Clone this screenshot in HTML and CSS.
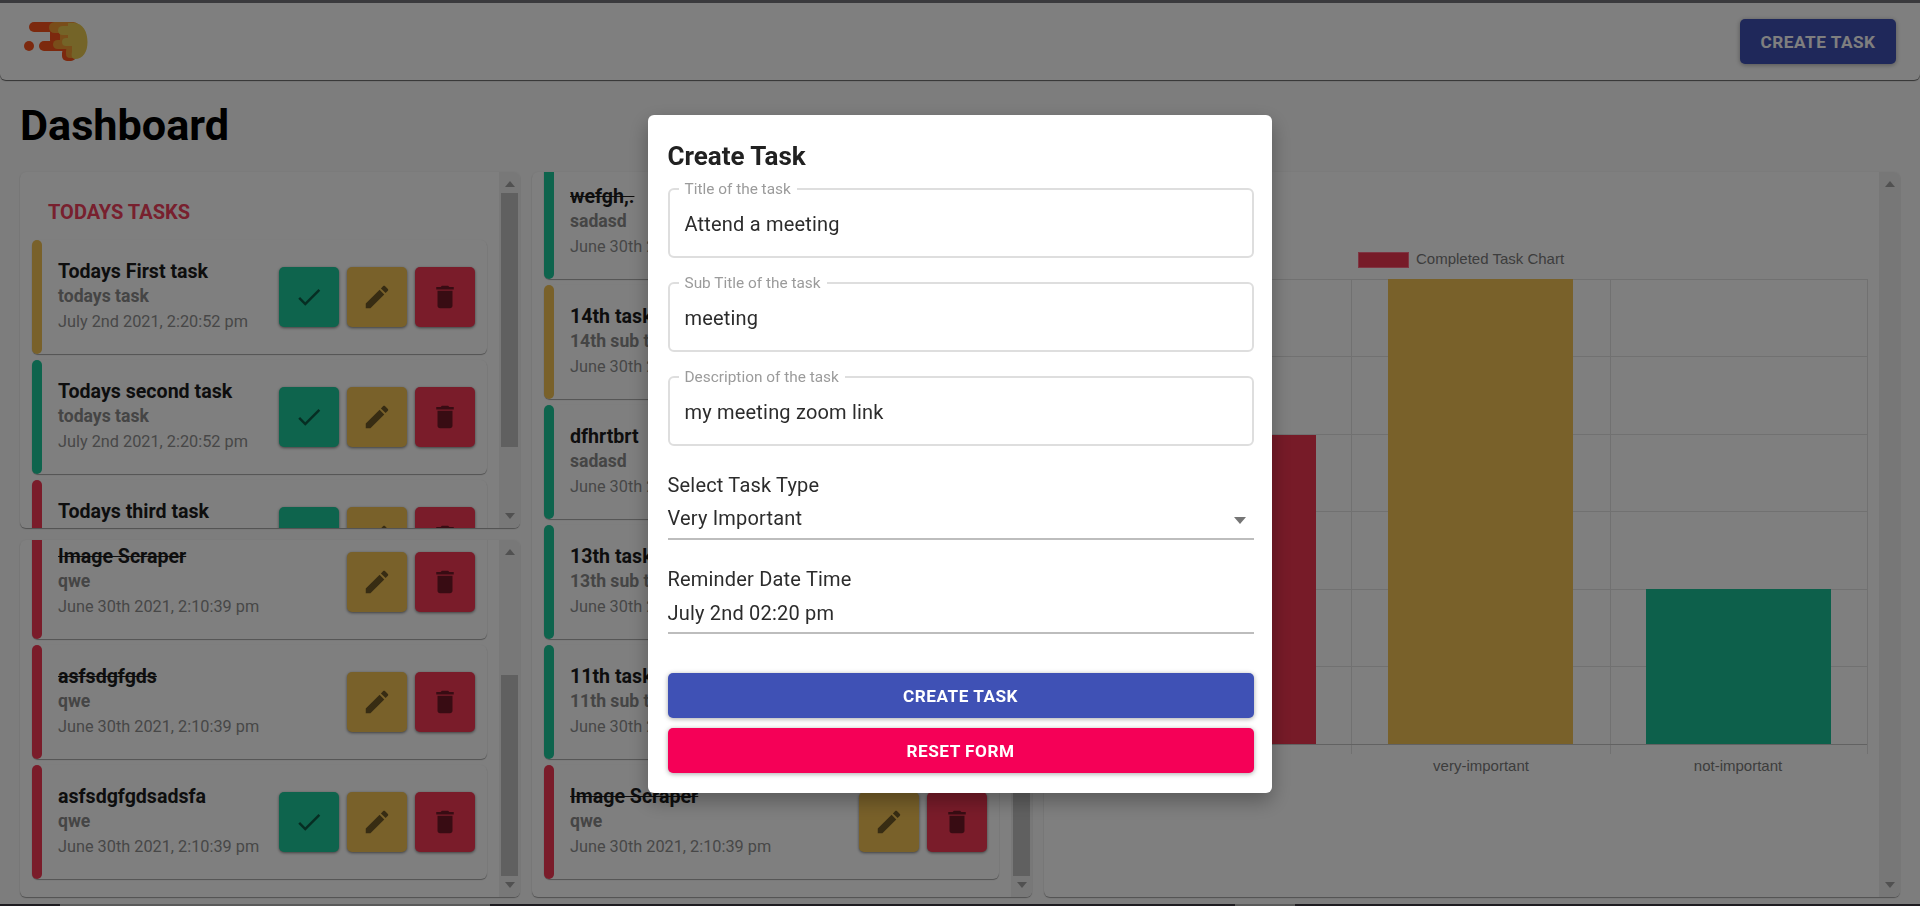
FILE: index.html

```html
<!DOCTYPE html>
<html lang="en">
<head>
  <meta charset="UTF-8">
  <meta name="viewport" content="width=device-width, initial-scale=1.0">
  <title>Dashboard</title>
  <link rel="stylesheet" href="styles.css">
</head>
<body>
  <svg class="icon-defs" width="0" height="0">
    <symbol id="icon-check" viewBox="0 0 24 24"><path d="M9 16.17L4.83 12l-1.42 1.41L9 19 21 7l-1.41-1.41z"/></symbol>
    <symbol id="icon-edit" viewBox="0 0 24 24"><path d="M3 17.25V21h3.75L17.81 9.94l-3.75-3.75L3 17.25zM20.71 7.04c.39-.39.39-1.02 0-1.41l-2.34-2.34c-.39-.39-1.02-.39-1.41 0l-1.83 1.83 3.75 3.75 1.83-1.83z"/></symbol>
    <symbol id="icon-delete" viewBox="0 0 24 24"><path d="M6 19c0 1.1.9 2 2 2h8c1.1 0 2-.9 2-2V7H6v12zM19 4h-3.5l-1-1h-5l-1 1H5v2h14V4z"/></symbol>
  </svg>

  <div class="top-strip"></div>

  <header class="app-header">
    <svg class="logo" width="66" height="42" viewBox="24 21 66 42">
      <g fill="#f8521c">
        <circle cx="29" cy="46" r="5"/>
        <rect x="29" y="22" width="40" height="10" rx="5"/>
        <rect x="39" y="41" width="35" height="10" rx="5"/>
        <rect x="50" y="28" width="24" height="16" rx="4"/>
        <rect x="62" y="48" width="14" height="13" rx="5"/>
      </g>
      <g fill="#f29a34">
        <rect x="49" y="22" width="30" height="11" rx="5.5"/>
        <rect x="53" y="40" width="25" height="9" rx="4.5"/>
        <rect x="60" y="30" width="18" height="12"/>
        <rect x="66" y="47" width="12" height="11" rx="4"/>
      </g>
      <g fill="#e8c850">
        <rect x="58" y="26" width="20" height="9" rx="4.5"/>
        <path d="M68 23H74C83 23 87.5 32 87.5 42C87.5 52 83 59 75 59C72 59 71 56 72 52V46H66A4 4 0 0 1 66 38H68Z"/>
      </g>
    </svg>
    <button class="btn btn-primary header-btn">CREATE TASK</button>
  </header>

  <h1 class="page-title">Dashboard</h1>

  <main class="board">
    <div class="board-col">
      <section class="panel panel-today">
        <div class="panel-body">
          <h2 class="panel-heading">TODAYS TASKS</h2>
          <div class="task-list">
            <div class="task-card">
              <span class="task-stripe yellow"></span>
              <div class="task-text">
                <div class="task-title">Todays First task</div>
                <div class="task-sub">todays task</div>
                <div class="task-date">July 2nd 2021, 2:20:52 pm</div>
              </div>
              <div class="task-actions">
                <button class="icon-btn green"><svg><use href="#icon-check"/></svg></button>
                <button class="icon-btn yellow"><svg><use href="#icon-edit"/></svg></button>
                <button class="icon-btn red"><svg><use href="#icon-delete"/></svg></button>
              </div>
            </div>
            <div class="task-card">
              <span class="task-stripe green"></span>
              <div class="task-text">
                <div class="task-title">Todays second task</div>
                <div class="task-sub">todays task</div>
                <div class="task-date">July 2nd 2021, 2:20:52 pm</div>
              </div>
              <div class="task-actions">
                <button class="icon-btn green"><svg><use href="#icon-check"/></svg></button>
                <button class="icon-btn yellow"><svg><use href="#icon-edit"/></svg></button>
                <button class="icon-btn red"><svg><use href="#icon-delete"/></svg></button>
              </div>
            </div>
            <div class="task-card">
              <span class="task-stripe red"></span>
              <div class="task-text">
                <div class="task-title">Todays third task</div>
                <div class="task-sub">todays task</div>
                <div class="task-date">July 2nd 2021, 2:20:52 pm</div>
              </div>
              <div class="task-actions">
                <button class="icon-btn green"><svg><use href="#icon-check"/></svg></button>
                <button class="icon-btn yellow"><svg><use href="#icon-edit"/></svg></button>
                <button class="icon-btn red"><svg><use href="#icon-delete"/></svg></button>
              </div>
            </div>
          </div>
        </div>
        <div class="scrollbar">
          <span class="arrow-up"></span>
          <span class="thumb thumb-today"></span>
          <span class="arrow-down"></span>
        </div>
      </section>

      <section class="panel panel-past">
        <div class="panel-body">
          <div class="task-list scrolled-past">
            <div class="task-card">
              <span class="task-stripe red"></span>
              <div class="task-text">
                <div class="task-title done">Image Scraper</div>
                <div class="task-sub">qwe</div>
                <div class="task-date">June 30th 2021, 2:10:39 pm</div>
              </div>
              <div class="task-actions">
                <button class="icon-btn yellow"><svg><use href="#icon-edit"/></svg></button>
                <button class="icon-btn red"><svg><use href="#icon-delete"/></svg></button>
              </div>
            </div>
            <div class="task-card">
              <span class="task-stripe red"></span>
              <div class="task-text">
                <div class="task-title done">asfsdgfgds</div>
                <div class="task-sub">qwe</div>
                <div class="task-date">June 30th 2021, 2:10:39 pm</div>
              </div>
              <div class="task-actions">
                <button class="icon-btn yellow"><svg><use href="#icon-edit"/></svg></button>
                <button class="icon-btn red"><svg><use href="#icon-delete"/></svg></button>
              </div>
            </div>
            <div class="task-card">
              <span class="task-stripe red"></span>
              <div class="task-text">
                <div class="task-title">asfsdgfgdsadsfa</div>
                <div class="task-sub">qwe</div>
                <div class="task-date">June 30th 2021, 2:10:39 pm</div>
              </div>
              <div class="task-actions">
                <button class="icon-btn green"><svg><use href="#icon-check"/></svg></button>
                <button class="icon-btn yellow"><svg><use href="#icon-edit"/></svg></button>
                <button class="icon-btn red"><svg><use href="#icon-delete"/></svg></button>
              </div>
            </div>
          </div>
        </div>
        <div class="scrollbar">
          <span class="arrow-up"></span>
          <span class="thumb thumb-past"></span>
          <span class="arrow-down"></span>
        </div>
      </section>
    </div>

    <section class="panel panel-all">
      <div class="panel-body">
        <div class="task-list scrolled-all">
          <div class="task-card">
            <span class="task-stripe green"></span>
            <div class="task-text">
              <div class="task-title done">wefgh,.</div>
              <div class="task-sub">sadasd</div>
              <div class="task-date">June 30th 2021, 2:10:39 pm</div>
            </div>
          </div>
          <div class="task-card">
            <span class="task-stripe yellow"></span>
            <div class="task-text">
              <div class="task-title">14th task</div>
              <div class="task-sub">14th sub task</div>
              <div class="task-date">June 30th 2021, 2:10:39 pm</div>
            </div>
          </div>
          <div class="task-card">
            <span class="task-stripe green"></span>
            <div class="task-text">
              <div class="task-title">dfhrtbrt</div>
              <div class="task-sub">sadasd</div>
              <div class="task-date">June 30th 2021, 2:10:39 pm</div>
            </div>
          </div>
          <div class="task-card">
            <span class="task-stripe green"></span>
            <div class="task-text">
              <div class="task-title">13th task</div>
              <div class="task-sub">13th sub task</div>
              <div class="task-date">June 30th 2021, 2:10:39 pm</div>
            </div>
          </div>
          <div class="task-card">
            <span class="task-stripe green"></span>
            <div class="task-text">
              <div class="task-title">11th task</div>
              <div class="task-sub">11th sub task</div>
              <div class="task-date">June 30th 2021, 2:10:39 pm</div>
            </div>
          </div>
          <div class="task-card">
            <span class="task-stripe red"></span>
            <div class="task-text">
              <div class="task-title done">Image Scraper</div>
              <div class="task-sub">qwe</div>
              <div class="task-date">June 30th 2021, 2:10:39 pm</div>
            </div>
            <div class="task-actions">
              <button class="icon-btn yellow"><svg><use href="#icon-edit"/></svg></button>
              <button class="icon-btn red"><svg><use href="#icon-delete"/></svg></button>
            </div>
          </div>
        </div>
      </div>
      <div class="scrollbar">
        <span class="arrow-up"></span>
        <span class="thumb thumb-all"></span>
        <span class="arrow-down"></span>
      </div>
    </section>

    <section class="panel panel-chart">
      <div class="panel-body chart-body">
        <svg class="chart" width="835" height="725" viewBox="1044 172 835 725">
          <rect class="legend-box" x="1358.5" y="252.5" width="50" height="15"/>
          <text class="chart-label" x="1416" y="264">Completed Task Chart</text>

          <path class="grid" d="M1092 279.5H1867M1092 356.5H1867M1092 434.5H1867M1092 511.5H1867M1092 589.5H1867M1092 666.5H1867"/>
          <path class="grid" d="M1351.5 279V754M1610.5 279V754M1867.5 279V754"/>
          <path class="axis" d="M1092 744.5H1867"/>

          <rect class="bar-red" x="1131" y="435" width="185" height="309"/>
          <rect class="bar-yellow" x="1388" y="279" width="185" height="465"/>
          <rect class="bar-green" x="1646" y="589" width="185" height="155"/>

          <text class="chart-label" x="1223" y="771" text-anchor="middle">important</text>
          <text class="chart-label" x="1481" y="771" text-anchor="middle">very-important</text>
          <text class="chart-label" x="1738" y="771" text-anchor="middle">not-important</text>
        </svg>
      </div>
      <div class="scrollbar scrollbar-empty">
        <span class="arrow-up"></span>
        <span class="arrow-down"></span>
      </div>
    </section>
  </main>

  <div class="bottom-strip">
    <span class="strip-dark strip-a"></span>
    <span class="strip-light strip-b"></span>
    <span class="strip-dark strip-c"></span>
    <span class="strip-light strip-d"></span>
    <span class="strip-dark strip-e"></span>
  </div>

  <div class="overlay">
    <form class="modal">
      <h2 class="modal-title">Create Task</h2>

      <fieldset class="field">
        <legend>Title of the task</legend>
        <div class="field-value">Attend a meeting</div>
      </fieldset>
      <fieldset class="field">
        <legend>Sub Title of the task</legend>
        <div class="field-value">meeting</div>
      </fieldset>
      <fieldset class="field">
        <legend>Description of the task</legend>
        <div class="field-value">my meeting zoom link</div>
      </fieldset>

      <div class="plain-label">Select Task Type</div>
      <div class="plain-value select-value">
        <span>Very Important</span>
        <span class="select-arrow"></span>
      </div>

      <div class="plain-label">Reminder Date Time</div>
      <div class="plain-value date-value">July 2nd 02:20 pm</div>

      <button type="button" class="btn btn-primary btn-wide btn-create">CREATE TASK</button>
      <button type="button" class="btn btn-pink btn-wide">RESET FORM</button>
    </form>
  </div>
</body>
</html>
```

FILE: styles.css

```css
* {
  box-sizing: border-box;
}

html, body {
  margin: 0;
  height: 906px;
  overflow: hidden;
}

body {
  background-color: #fafafa;
  font-family: Roboto, "Liberation Sans", sans-serif;
  display: flex;
  flex-direction: column;
}

.icon-defs {
  display: block;
  height: 0;
}

.top-strip {
  height: 3px;
  background-color: #74747a;
}

.app-header {
  height: 77px;
  background-color: #fff;
  border-radius: 0 0 6px 6px;
  box-shadow: 0 1px 1px rgba(0, 0, 0, 0.6);
  padding: 16px 24px 0 24px;
  display: flex;
  justify-content: space-between;
  align-items: flex-start;
}

.logo {
  margin-top: 2px;
}

.page-title {
  margin: 2px 0;
  height: 88px;
  padding: 0 20px;
  font-size: 43.2px;
  font-weight: 700;
  line-height: 88px;
  color: #000;
}

.board {
  height: 725px;
  padding: 0 20px;
  display: grid;
  grid-template-columns: 500px 500px 1fr;
  gap: 12px;
}

.board-col {
  display: flex;
  flex-direction: column;
  gap: 12px;
  min-height: 0;
}

/* panels */
.panel {
  display: flex;
  background-color: #fff;
  border-radius: 6px;
  overflow: hidden;
  box-shadow: 0 1px 1px rgba(0, 0, 0, 0.35), 0 0 2px rgba(0, 0, 0, 0.06);
  min-height: 0;
}

.panel-today {
  height: 356px;
}

.panel-past {
  height: 357px;
}

.panel-body {
  flex: 1;
  min-width: 0;
  overflow: hidden;
  padding: 0 12px;
}

.panel-heading {
  margin: 0;
  height: 68px;
  padding: 28px 0 0 16px;
  font-size: 20px;
  font-weight: 700;
  line-height: 24px;
  color: #f0405c;
}

.scrollbar {
  width: 21px;
  flex-shrink: 0;
  background-color: #f1f1f1;
  display: flex;
  flex-direction: column;
  align-items: center;
  padding: 9px 0;
}

.scrollbar-empty {
  background-color: #efefef;
  justify-content: space-between;
}

.arrow-up,
.arrow-down {
  width: 0;
  height: 0;
  border-left: 5px solid transparent;
  border-right: 5px solid transparent;
}

.arrow-up {
  border-bottom: 6px solid #a3a3a3;
}

.arrow-down {
  border-top: 6px solid #a3a3a3;
  margin-top: auto;
}

.thumb {
  width: 17px;
  background-color: #c1c1c1;
}

.thumb-today {
  margin-top: 6px;
  height: 254px;
}

.thumb-past {
  margin-top: 120px;
  height: 201px;
}

.thumb-all {
  margin-top: 200px;
  height: 489px;
}

/* task cards */
.task-list {
  display: flex;
  flex-direction: column;
  gap: 6px;
}

.scrolled-past {
  margin-top: -15px;
}

.scrolled-all {
  margin-top: -7px;
}

.task-card {
  flex-shrink: 0;
  height: 114px;
  display: flex;
  align-items: center;
  background-color: #fff;
  border-radius: 6px;
  box-shadow: 0 1px 1px rgba(0, 0, 0, 0.35), 0 0 2px rgba(0, 0, 0, 0.06);
  padding-right: 12px;
}

.task-stripe {
  width: 10px;
  align-self: stretch;
  border-radius: 5px;
}

.task-stripe.red {
  background-color: #f43854;
}

.task-stripe.yellow {
  background-color: #f2c254;
}

.task-stripe.green {
  background-color: #1cc89a;
}

.task-text {
  flex: 1;
  min-width: 0;
  margin-left: 16px;
  padding-bottom: 2px;
}

.task-title {
  font-size: 19.6px;
  font-weight: 700;
  line-height: 25px;
  color: #1c1c1c;
}

.task-title.done {
  text-decoration: line-through;
}

.task-sub {
  font-size: 17.6px;
  font-weight: 700;
  line-height: 25px;
  color: #8a8a8a;
}

.task-date {
  font-size: 16.3px;
  line-height: 25px;
  color: #8f8f8f;
}

.task-actions {
  display: flex;
  gap: 8px;
}

.icon-btn {
  width: 60px;
  height: 60px;
  border: none;
  padding: 0;
  border-radius: 5px;
  box-shadow: 0 1px 3px rgba(0, 0, 0, 0.5);
  display: flex;
  align-items: center;
  justify-content: center;
}

.icon-btn svg {
  width: 30px;
  height: 30px;
  fill: rgba(0, 0, 0, 0.54);
}

.icon-btn.green {
  background-color: #1cc89a;
}

.icon-btn.yellow {
  background-color: #f2c254;
}

.icon-btn.red {
  background-color: #f43854;
}

/* chart */
.chart-body {
  padding: 0;
}

.chart {
  display: block;
}

.legend-box {
  fill: #ee3650;
  stroke: #ff6a84;
}

.chart-label {
  font-family: "Liberation Sans", Arial, sans-serif;
  font-size: 15px;
  fill: #7a7a7a;
}

.grid {
  fill: none;
  stroke: #e2e2e2;
}

.axis {
  fill: none;
  stroke: #c4c4c4;
}

.bar-red {
  fill: #ee3650;
}

.bar-yellow {
  fill: #f2c254;
}

.bar-green {
  fill: #1ac096;
}

/* bottom strip */
.bottom-strip {
  margin-top: auto;
  height: 2px;
  display: flex;
}

.strip-dark {
  background-color: #3c3840;
}

.strip-light {
  background-color: #b4b4b4;
}

.strip-a {
  width: 60px;
}

.strip-b {
  width: 430px;
}

.strip-c {
  width: 745px;
}

.strip-d {
  width: 60px;
}

.strip-e {
  flex: 1;
}

/* modal */
.overlay {
  position: fixed;
  inset: 0;
  padding-top: 2px;
  background-color: rgba(0, 0, 0, 0.5);
  display: flex;
  align-items: center;
  justify-content: center;
}

.modal {
  width: 624px;
  padding: 20px 18.5px 20px 19.5px;
  background-color: #fff;
  border-radius: 6px;
  box-shadow: 0 8px 20px rgba(0, 0, 0, 0.3);
  display: flex;
  flex-direction: column;
}

.modal-title {
  margin: 0 0 6px 0;
  padding-top: 1px;
  height: 40px;
  font-size: 26px;
  font-weight: 700;
  line-height: 40px;
  color: #212121;
}

.field {
  margin: 0 0 17px 0;
  padding: 0 15px;
  border: 2px solid #dedede;
  border-radius: 6px;
  min-width: 0;
}

.field:nth-of-type(3) {
  margin-bottom: 0;
}

.field legend {
  margin-left: -6px;
  padding: 0 6px;
  font-size: 15.4px;
  line-height: 16px;
  color: #9b9b9b;
}

.field-value {
  margin-top: 15px;
  padding-bottom: 20px;
  font-size: 20px;
  letter-spacing: 0.19px;
  line-height: 24px;
  color: #2c2c2c;
}

.plain-label {
  margin-top: 27px;
  font-size: 20px;
  letter-spacing: 0.19px;
  line-height: 24px;
  color: #2c2c2c;
}

.plain-value {
  border-bottom: 2px solid #bdbdbd;
  font-size: 20px;
  letter-spacing: 0.19px;
  line-height: 24px;
  color: #2c2c2c;
}

.select-value {
  margin-top: 9px;
  padding: 0 8px 8px 0;
  display: flex;
  justify-content: space-between;
  align-items: center;
}

.select-arrow {
  width: 0;
  height: 0;
  margin-top: 4px;
  border-left: 6.5px solid transparent;
  border-right: 6.5px solid transparent;
  border-top: 7px solid #757575;
}

.date-value {
  margin-top: 10px;
  padding-bottom: 7px;
}

.btn {
  border: none;
  border-radius: 5px;
  height: 45px;
  font-family: inherit;
  font-size: 17.2px;
  font-weight: 700;
  letter-spacing: 0.5px;
  color: #fff;
  box-shadow: 0 1px 5px rgba(0, 0, 0, 0.35);
}

.btn-primary {
  background-color: #3f51b5;
}

.btn-pink {
  background-color: #f50057;
}

.header-btn {
  width: 156px;
}

.btn-wide {
  width: 100%;
}

.btn-create {
  margin-top: 39px;
  margin-bottom: 10px;
}
```
